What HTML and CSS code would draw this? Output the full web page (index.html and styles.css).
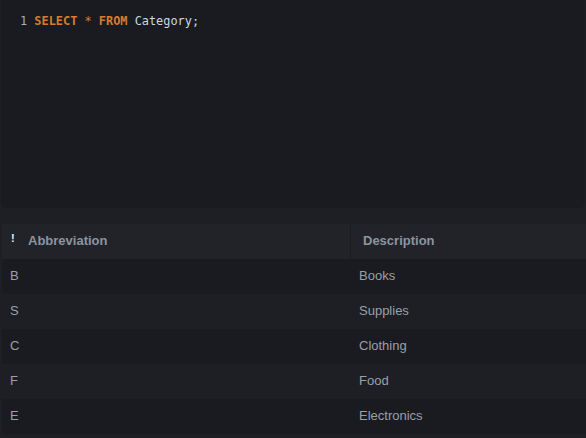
FILE: index.html
```html
<!DOCTYPE html>
<html>
<head>
<meta charset="utf-8">
<link rel="stylesheet" href="styles.css">
</head>
<body>
<div class="editor">
  <div class="code-line"><span class="ln">1</span> <span class="kw">SELECT</span> <span class="op">*</span> <span class="kw">FROM</span> <span class="id">Category;</span></div>
</div>
<div class="results">
  <div class="row head">
    <div class="cell c1"><span class="key">!</span>Abbreviation</div>
    <div class="cell c2">Description</div>
  </div>
  <div class="row odd"><div class="cell c1">B</div><div class="cell c2">Books</div></div>
  <div class="row even"><div class="cell c1">S</div><div class="cell c2">Supplies</div></div>
  <div class="row odd"><div class="cell c1">C</div><div class="cell c2">Clothing</div></div>
  <div class="row even"><div class="cell c1">F</div><div class="cell c2">Food</div></div>
  <div class="row odd"><div class="cell c1">E</div><div class="cell c2">Electronics</div></div>
</div>
</body>
</html>
```
FILE: styles.css
```css
html, body {
  margin: 0;
  padding: 0;
  background: #1e1f24;
  height: 100%;
  overflow: hidden;
}
.editor {
  height: 208px;
  background: #1a1b20;
  border-radius: 0 0 6px 6px;
  margin: 0 1px;
  box-sizing: border-box;
  padding-top: 14px;
  padding-left: 19px;
}
.code-line {
  font-family: "DejaVu Sans Mono", monospace;
  font-size: 11.9px;
  line-height: 14px;
  color: #c8d6e4;
  white-space: pre;
}
.ln { color: #a3adbb; }
.kw { color: #d97b2e; font-weight: bold; }
.op { color: #d97b2e; }
.id { color: #c8d8e8; }
.results {
  margin-top: 16px;
  margin-left: 2px;
  font-family: "Liberation Sans", Arial, sans-serif;
  font-size: 13px;
}
.row {
  display: grid;
  grid-template-columns: 348px 1fr;
  height: 35px;
  align-items: center;
}
.cell {
  color: #9a9fa8;
  padding-bottom: 3px;
}
.head {
  background: #222328;
  color: #8b94a1;
  font-weight: bold;
}
.head .cell { color: #8b94a1; }
.head .c2 {
  border-left: 1px solid #1c1d21;
  height: 100%;
  box-sizing: border-box;
  display: flex;
  align-items: center;
  padding-left: 12px;
}
.head .c1 {
  display: flex;
  align-items: center;
  padding-left: 9px;
}
.key {
  color: #e8f0ff;
  font-size: 11px;
  font-weight: bold;
  width: 17px;
  position: relative;
  top: -2px;
}
.odd { background: #1a1b20; }
.even { background: #1e1f24; }
.c1 { padding-left: 8px; }
.c2 { padding-left: 9px; }
```
